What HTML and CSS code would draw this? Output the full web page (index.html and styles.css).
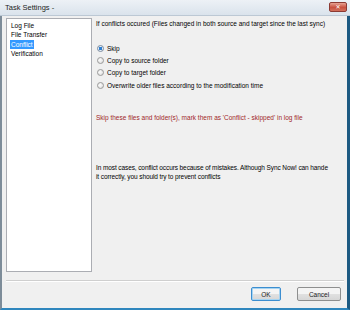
FILE: index.html
```html
<!DOCTYPE html>
<html lang="en">
<head>
    <meta charset="UTF-8">
    <title>Task Settings</title>
    <link rel="stylesheet" href="styles.css">
</head>
<body>

<div class="window">
    <div class="title-bar">
        <span class="title">Task Settings -</span>
        <span class="close-btn">&#x2715;</span>
    </div>

    <div class="client">
        <div class="main">
            <ul class="nav-list">
                <li>Log File</li>
                <li>File Transfer</li>
                <li class="selected">Conflict</li>
                <li>Verification</li>
            </ul>

            <div class="panel">
                <p class="intro">If conflicts occured (Files changed in both source and target since the last sync)</p>

                <div class="radio-group">
                    <label class="radio checked"><span class="dot"></span>Skip</label>
                    <label class="radio"><span class="dot"></span>Copy to source folder</label>
                    <label class="radio"><span class="dot"></span>Copy to target folder</label>
                    <label class="radio"><span class="dot"></span>Overwrite older files according to the modification time</label>
                </div>

                <p class="note">Skip these files and folder(s), mark them as 'Conflict - skipped' in log file</p>

                <p class="hint">In most cases, conflict occurs because of mistakes. Although Sync Now! can hande<br>it correctly, you should try to prevent conflicts</p>
            </div>
        </div>

        <div class="separator"></div>

        <div class="buttons">
            <button class="btn default">OK</button>
            <button class="btn">Cancel</button>
        </div>
    </div>
</div>

</body>
</html>
```

FILE: styles.css
```css
:root {
    --face: #f0f0f0;
    --text: #000000;
    --select: #3399ff;
    --note: #a02828;
    --font-ui: 'Liberation Sans', 'DejaVu Sans', sans-serif;
}

* { margin: 0; padding: 0; box-sizing: border-box; }
body {
    width: 350px;
    height: 310px;
    overflow: hidden;
    font-family: var(--font-ui);
    font-size: 6.5px;
    color: var(--text);
}

/* --- Window frame --- */
.window {
    width: 350px;
    height: 310px;
    display: flex;
    flex-direction: column;
    background: var(--face);
    border-left: 2px solid #7d8c99;
    border-right: 3px solid #1d5a82;
    border-bottom: 2px solid #2f86bd;
}

.title-bar {
    height: 16px;
    flex: none;
    display: flex;
    align-items: center;
    justify-content: space-between;
    margin-left: -2px;
    margin-right: -3px;
    padding: 0 3px 0 5px;
    background: linear-gradient(#edf1f6, #dae3ec);
    border-bottom: 1px solid #bcc8d4;
}
.title {
    font-size: 7.5px;
    color: #1e1e1e;
}
.close-btn {
    width: 18px;
    height: 10px;
    border-radius: 2px;
    border: 1px solid #8c3a33;
    background: linear-gradient(#e7a293, #c9513f 55%, #d2705c);
    color: #fff;
    font-size: 6px;
    font-weight: bold;
    display: flex;
    align-items: center;
    justify-content: center;
    margin-top: -2px;
}

/* --- Client area --- */
.client {
    flex: 1;
    display: flex;
    flex-direction: column;
    padding: 2px 0 0 4px;
}

.main {
    display: flex;
}

.nav-list {
    list-style: none;
    width: 86px;
    height: 254px;
    flex: none;
    background: #fff;
    border: 1px solid #abadb3;
    padding: 2px 0 0 3px;
}
.nav-list li {
    line-height: 9.4px;
    padding-left: 1px;
    width: max-content;
}
.nav-list li.selected {
    background: var(--select);
    color: #fff;
    padding-right: 1px;
}

.panel {
    padding: 1px 4px 0 4px;
}
.intro {
    line-height: 9px;
}

.radio-group {
    margin-top: 16px;
    display: flex;
    flex-direction: column;
    gap: 3.2px;
}
.radio {
    display: flex;
    align-items: center;
    line-height: 9px;
    padding-left: 1px;
}
.dot {
    width: 7px;
    height: 7px;
    border-radius: 50%;
    border: 1px solid #9a9a9a;
    background: radial-gradient(circle at 40% 40%, #fdfdfd, #d8d8d8);
    margin-right: 3px;
    flex: none;
}
.radio.checked .dot {
    background: radial-gradient(circle, #2f7fd0 0 1.6px, #e4eef8 2px, #d0d8e0);
    border-color: #7c8da0;
}

.note {
    color: var(--note);
    margin-top: 23px;
    line-height: 9px;
}

.hint {
    margin-top: 41px;
    line-height: 9.2px;
    white-space: nowrap;
    letter-spacing: -0.1px;
}

/* --- Footer --- */
.separator {
    margin-top: 8px;
    margin-right: 3px;
    border-top: 1px solid #cfcfcf;
    border-bottom: 1px solid #fff;
}

.buttons {
    display: flex;
    justify-content: flex-end;
    gap: 16px;
    padding: 5px 6px 0 0;
}
.btn {
    height: 14px;
    font-family: var(--font-ui);
    font-size: 6.5px;
    color: #222;
    border-radius: 2px;
    border: 1px solid #8e8f8f;
    background: linear-gradient(#f4f4f4 50%, #e1e1e1 50%, #d6d6d6);
}
.btn.default {
    width: 30px;
    border-color: #3c8ed0;
    box-shadow: inset 0 0 0 1px #a6d4f2;
}
.btn:not(.default) {
    width: 44px;
}
```
